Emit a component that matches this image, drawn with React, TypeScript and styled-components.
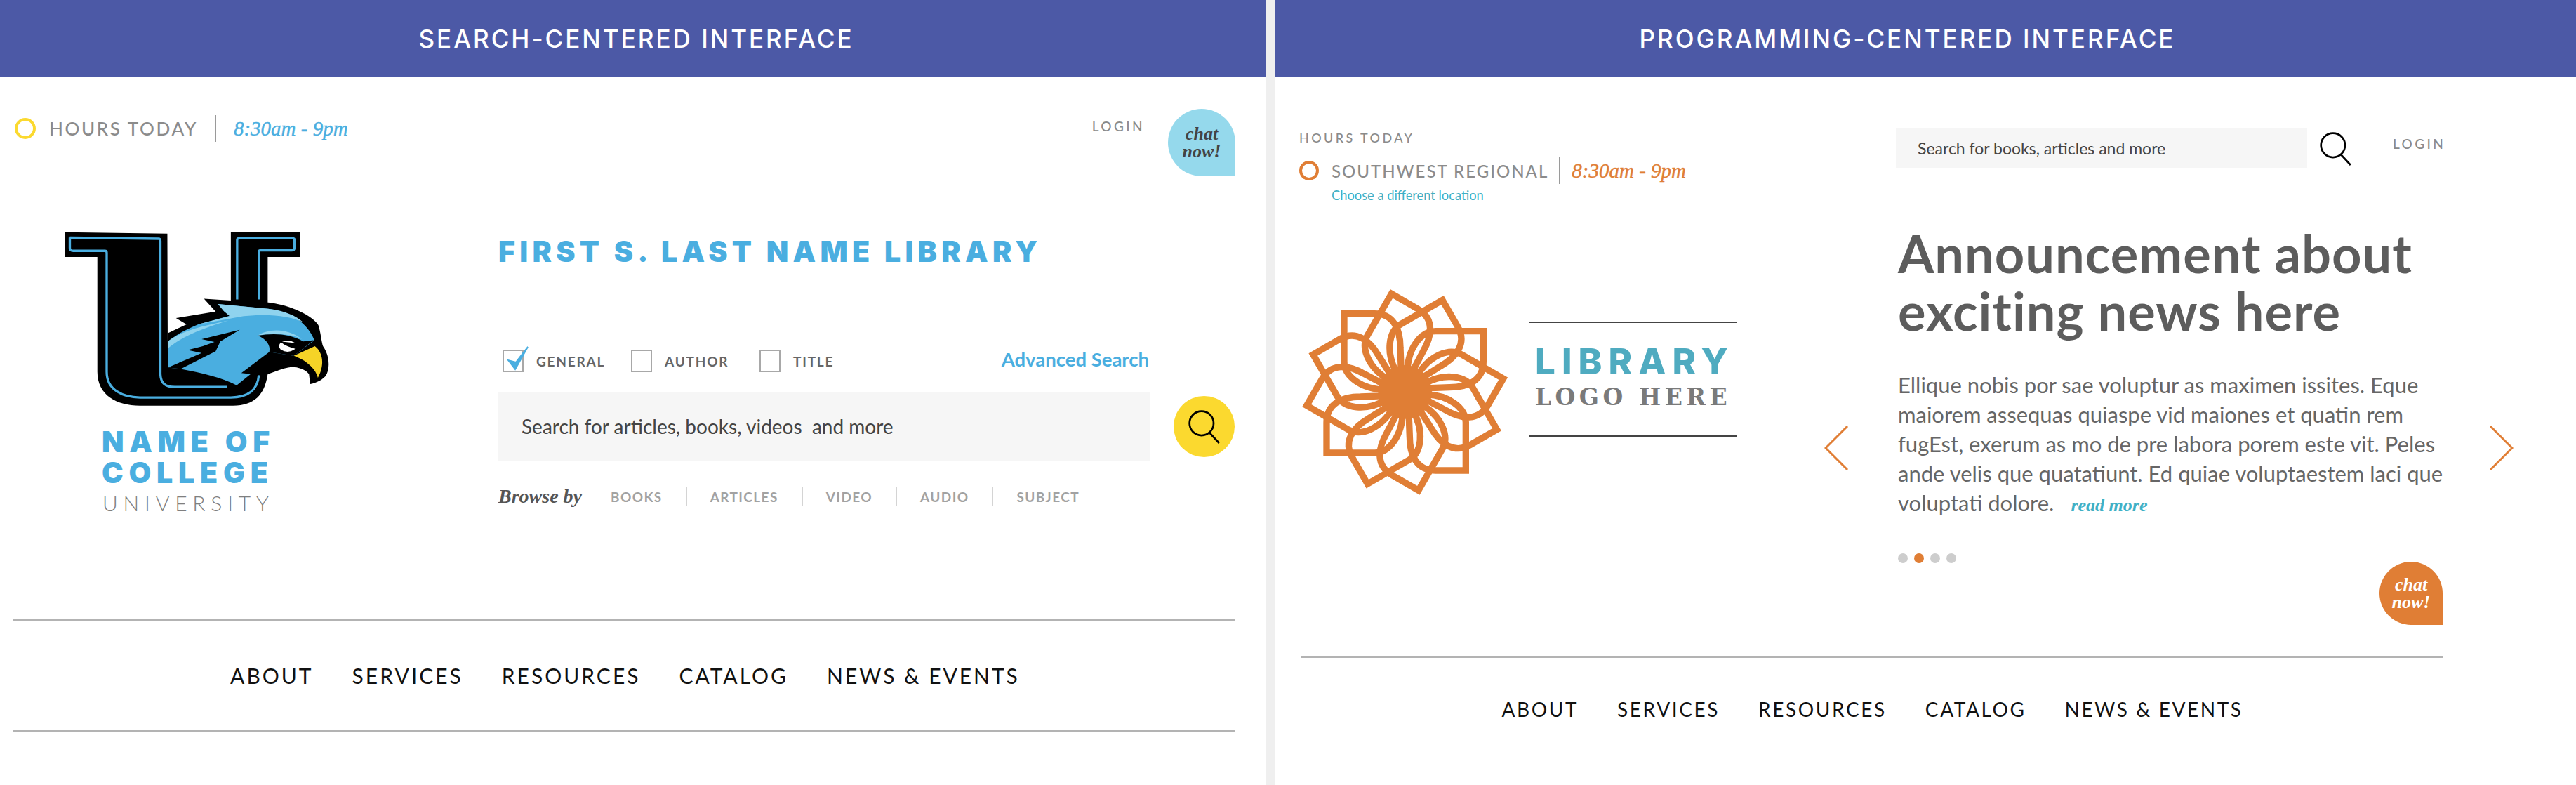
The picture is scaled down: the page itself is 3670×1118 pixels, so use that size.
import styled, { createGlobalStyle } from 'styled-components';

const GlobalStyle = createGlobalStyle`
  html, body {
    margin: 0;
    padding: 0;
    background: #fff;
    font-family: "Lato", "Open Sans", sans-serif;
  }
  * { box-sizing: border-box; }
`;

const SANS = '"Lato", "Open Sans", sans-serif';
const HEAVY = '"Inter", "Liberation Sans", sans-serif';
const SERIF = '"Liberation Serif", serif';
const BLUE = '#4aaee0';
const ORANGE = '#e07e35';
const TEAL = '#3fb0c6';

const Page = styled.div`
  display: flex;
  width: 3670px;
  height: 1118px;
  overflow: hidden;
  background: #efefef;
  gap: 14px;
  font-family: ${SANS};
`;

const Panel = styled.section<{ $width: number }>`
  width: ${({ $width }) => $width}px;
  flex: none;
  background: #fff;
`;

const Banner = styled.h2<{ $shift: number }>`
  margin: 0;
  height: 109px;
  background: #4c59a6;
  color: #fff;
  display: flex;
  align-items: center;
  justify-content: center;
  padding-left: ${({ $shift }) => Math.max($shift, 0)}px;
  padding-right: ${({ $shift }) => Math.max(-$shift, 0)}px;
  font-family: ${HEAVY};
  font-size: 35px;
  font-weight: 500;
  letter-spacing: 3px;
`;

/* left panel */
const LeftBody = styled.div`
  padding: 46px 43px 0 21px;
`;

const TopRow = styled.div`
  display: flex;
  justify-content: space-between;
  align-items: flex-start;
  height: 175px;
`;

const Hours = styled.div`
  display: flex;
  align-items: center;
  margin-top: 9px;
  height: 38px;
`;

const StatusRing = styled.span<{ $color: string; $size: number }>`
  width: ${({ $size }) => $size}px;
  height: ${({ $size }) => $size}px;
  border: 4px solid ${({ $color }) => $color};
  border-radius: 50%;
  flex: none;
`;

const HoursLabel = styled.span<{ $size: number; $gap: number; $spacing: number }>`
  margin-left: ${({ $gap }) => $gap}px;
  font-size: ${({ $size }) => $size}px;
  font-weight: 500;
  letter-spacing: ${({ $spacing }) => $spacing}px;
  color: #8b8b8b;
  white-space: nowrap;
`;

const HoursTime = styled.span<{ $color: string; $height: number; $pad: number }>`
  margin-left: ${({ $pad }) => $pad}px;
  padding-left: ${({ $pad }) => $pad + 1}px;
  height: ${({ $height }) => $height}px;
  border-left: 2px solid #9a9a9a;
  display: flex;
  align-items: center;
  font-family: ${SERIF};
  font-style: italic;
  font-weight: 400;
  font-size: 29px;
  -webkit-text-stroke: 0.4px ${({ $color }) => $color};
  color: ${({ $color }) => $color};
  white-space: nowrap;
`;

const TopActions = styled.div`
  display: flex;
  align-items: flex-start;
  gap: 33px;
`;

const Login = styled.a<{ $top: number; $left?: number }>`
  margin-top: ${({ $top }) => $top}px;
  margin-left: ${({ $left }) => $left ?? 0}px;
  font-size: 19px;
  font-weight: 500;
  letter-spacing: 3.4px;
  line-height: 1;
  color: #8a8a8a;
`;

const ChatBubble = styled.div<{ $bg: string; $color: string; $size: number; $top?: number }>`
  width: ${({ $size }) => $size}px;
  height: ${({ $size }) => $size}px;
  margin-top: ${({ $top }) => $top ?? 0}px;
  flex: none;
  border-radius: 50% 50% 0 50%;
  background: ${({ $bg }) => $bg};
  color: ${({ $color }) => $color};
  display: flex;
  align-items: center;
  justify-content: center;
  text-align: center;
  font-family: ${SERIF};
  font-style: italic;
  font-weight: 700;
  font-size: 26px;
  line-height: 25px;
`;

const MainRow = styled.div`
  display: grid;
  grid-template-columns: 689px 1fr;
  height: 551px;
`;

const CollegeColumn = styled.div`
  padding: 0 0 0 71px;
`;

const CollegeLogo = styled.svg`
  display: block;
  width: 378px;
  height: 250px;
`;

const CollegeName = styled.div`
  margin: 27px 0 0 53px;
  color: ${BLUE};
  font-family: ${HEAVY};
  font-weight: 900;
  font-size: 41px;
  line-height: 44px;
  letter-spacing: 7.8px;
  white-space: nowrap;
`;

const CollegeKind = styled.div`
  margin: 5px 0 0 54px;
  color: #7f7f7f;
  font-size: 30px;
  font-weight: 300;
  line-height: 32px;
  letter-spacing: 7.8px;
`;

const SearchColumn = styled.div`
  display: flex;
  flex-direction: column;
`;

const LibraryTitle = styled.h1`
  margin: 0;
  height: 56px;
  color: ${BLUE};
  font-family: ${HEAVY};
  font-weight: 900;
  font-size: 41px;
  line-height: 56px;
  letter-spacing: 6.3px;
  white-space: nowrap;
`;

const FilterRow = styled.div`
  margin: 106px 0 0 6px;
  height: 38px;
  display: flex;
  align-items: flex-end;
  width: 921px;
`;

const Filter = styled.label<{ $width: number }>`
  width: ${({ $width }) => $width}px;
  display: flex;
  align-items: center;
  position: relative;
`;

const Box = styled.span`
  width: 30px;
  height: 32px;
  border: 2px solid #a8a8a8;
  flex: none;
  margin-right: 18px;
`;

const Tick = styled.svg`
  position: absolute;
  left: 6px;
  top: -6px;
  width: 34px;
  height: 38px;
`;

const FilterLabel = styled.span`
  font-size: 19px;
  font-weight: 700;
  letter-spacing: 1.8px;
  color: #666;
`;

const AdvancedLink = styled.a`
  margin-left: auto;
  font-size: 27.5px;
  font-weight: 700;
  line-height: 36px;
  color: ${BLUE};
  white-space: nowrap;
`;

const SearchRow = styled.div`
  margin-top: 28px;
  display: flex;
  align-items: center;
`;

const SearchField = styled.div<{ $width: number; $height: number; $pad: number; $size: number }>`
  width: ${({ $width }) => $width}px;
  height: ${({ $height }) => $height}px;
  background: #f6f6f6;
  padding-left: ${({ $pad }) => $pad}px;
  display: flex;
  align-items: center;
  flex: none;
  font-size: ${({ $size }) => $size}px;
  color: #444;
  white-space: pre;
`;

const YellowButton = styled.div`
  margin-left: 33px;
  width: 87px;
  height: 87px;
  border-radius: 50%;
  background: #fbd92f;
  display: flex;
  align-items: center;
  justify-content: center;
  flex: none;
`;

const BrowseRow = styled.div`
  margin-top: 37px;
  display: flex;
  align-items: center;
  height: 28px;
`;

const BrowseLabel = styled.span`
  width: 160px;
  font-family: ${SERIF};
  font-style: italic;
  font-weight: 700;
  font-size: 28px;
  color: #555;
`;

const BrowseItem = styled.a<{ $last?: boolean }>`
  padding-right: 33px;
  margin-right: 33px;
  height: 27px;
  display: flex;
  align-items: center;
  border-right: ${({ $last }) => ($last ? 'none' : '2px solid #d4d4d4')};
  font-size: 19px;
  font-weight: 700;
  letter-spacing: 1.4px;
  color: #a2a2a2;
`;

const Rule = styled.hr<{ $left: number; $width: number; $thick: number }>`
  margin: 0 0 0 ${({ $left }) => $left}px;
  width: ${({ $width }) => $width}px;
  height: ${({ $thick }) => $thick}px;
  border: 0;
  background: #b3b3b3;
`;

const NavFrame = styled.div<{ $left: number; $width: number }>`
  margin-left: ${({ $left }) => $left}px;
  width: ${({ $width }) => $width}px;
`;

const MainNav = styled.nav<{ $height: number; $gap: number; $size: number; $spacing: number }>`
  height: ${({ $height }) => $height}px;
  display: flex;
  align-items: center;
  justify-content: center;
  gap: ${({ $gap }) => $gap}px;
  font-size: ${({ $size }) => $size}px;
  letter-spacing: ${({ $spacing }) => $spacing}px;
  color: #111;
  white-space: nowrap;
`;

/* right panel */
const RightBody = styled.div`
  display: flex;
  height: 825px;
  padding: 74px 0 0 34px;
`;

const BrandColumn = styled.div`
  width: 748px;
  flex: none;
`;

const SmallHeading = styled.div`
  margin-top: 2px;
  font-size: 18px;
  font-weight: 500;
  line-height: 22px;
  letter-spacing: 3.4px;
  color: #8b8b8b;
`;

const LocationRow = styled.div`
  display: flex;
  align-items: center;
  margin-top: 17px;
  height: 38px;
`;

const ChooseLink = styled.a`
  display: block;
  margin: 4px 0 0 46px;
  font-size: 18.3px;
  line-height: 24px;
  color: ${TEAL};
`;

const Brand = styled.div`
  display: flex;
  align-items: center;
  margin-top: 110px;
`;

const Flower = styled.svg`
  display: block;
  width: 340px;
  height: 340px;
  margin-left: -31px;
  flex: none;
`;

const BrandText = styled.div`
  width: 295px;
  height: 164px;
  margin: -60px 0 0 19px;
  border-top: 2px solid #444;
  border-bottom: 2px solid #444;
  display: flex;
  flex-direction: column;
  align-items: center;
`;

const BrandTitle = styled.div`
  margin-top: 30px;
  padding-left: 5px;
  font-family: ${HEAVY};
  font-weight: 800;
  font-size: 51px;
  line-height: 50px;
  letter-spacing: 9px;
  color: #4fabc0;
`;

const BrandSub = styled.div`
  margin-top: 8px;
  font-family: "DejaVu Serif", serif;
  font-weight: 700;
  font-size: 33px;
  line-height: 36px;
  letter-spacing: 5.6px;
  color: #7a7a7a;
`;

const ArrowButton = styled.svg<{ $gap: number }>`
  display: block;
  width: 35px;
  height: 64px;
  flex: none;
  margin: 423px 0 0 ${({ $gap }) => $gap}px;
`;

const SlideColumn = styled.div`
  width: 776px;
  flex: none;
  margin-left: 70px;
`;

const SearchBar = styled.div`
  display: flex;
  align-items: center;
  margin-left: -3px;
  height: 56px;
`;

const PlainIcon = styled.span`
  display: flex;
  margin-left: 16px;
  flex: none;
`;

const Headline = styled.h1`
  margin: 81px 0 0;
  font-size: 74px;
  font-weight: 700;
  line-height: 82px;
  letter-spacing: 1px;
  color: #5d5d5d;
  white-space: nowrap;
`;

const Body = styled.p`
  margin: 43px 0 0;
  font-size: 31px;
  line-height: 42px;
  color: #666;
  white-space: nowrap;
`;

const ReadMore = styled.a`
  margin-left: 24px;
  font-family: ${SERIF};
  font-style: italic;
  font-weight: 700;
  font-size: 26px;
  color: ${TEAL};
`;

const SlideFooter = styled.div`
  display: flex;
  justify-content: space-between;
  align-items: flex-start;
  margin-top: 47px;
`;

const Dots = styled.div`
  display: flex;
  gap: 9px;
`;

const Dot = styled.span<{ $active?: boolean }>`
  width: 14px;
  height: 14px;
  border-radius: 50%;
  background: ${({ $active }) => ($active ? ORANGE : '#cdcdcd')};
`;

type NavProps = { gap: number; size: number; height: number; spacing: number };

const NavLinks = ({ gap, size, height, spacing }: NavProps) => (
  <MainNav $gap={gap} $size={size} $height={height} $spacing={spacing}>
    <span>ABOUT</span>
    <span>SERVICES</span>
    <span>RESOURCES</span>
    <span>CATALOG</span>
    <span>NEWS &amp; EVENTS</span>
  </MainNav>
);

const Magnifier = ({ size }: { size: number }) => (
  <svg width={size} height={size} viewBox="0 0 48 48" fill="none" stroke="#000">
    <circle cx="20" cy="20" r="16.5" strokeWidth="2.6" />
    <line x1="31" y1="33" x2="44" y2="47" strokeWidth="2.6" />
  </svg>
);

const Falcon = () => (
  <CollegeLogo viewBox="128 90 1136 752">
    <path
      fill="#000"
      d="M128 92 L568 98 L570 700 L840 700 L840 92 L1138 92 L1138 198 L998 198 L998 700 C985 790 940 835 850 835 L450 835 C350 835 268 790 268 690 L268 198 L128 198 Z"
    />
    <g fill="none" stroke="#4aaee0" strokeWidth="10">
      <path d="M150 115 L530 120 Q538 120 538 130 L538 700 C540 740 560 755 600 755 L825 755" />
      <path d="M150 115 L150 160 Q150 172 165 172 L300 172 Q308 172 308 180 L308 690 C308 770 380 800 450 800 L840 800 C910 800 955 770 960 705" />
      <path d="M867 380 L867 125 Q867 118 875 118 L1105 118 Q1113 118 1113 125 L1113 160 Q1113 170 1100 170 L965 170 Q960 170 960 178 L960 380" />
    </g>
    <path
      fill="#000"
      d="M725 377 L840 385 L1000 393 C1100 405 1190 450 1215 490 C1225 520 1228 560 1235 580 C1264 620 1267 680 1245 710 C1225 730 1200 740 1180 743 L1175 700 C1160 680 1130 670 1100 670 C1060 675 1030 690 995 702 L950 700 L570 700 L570 525 L650 487 L605 460 L775 432 Z"
    />
    <path
      fill="#4aaee0"
      d="M785 400 L1000 420 C1090 430 1170 480 1198 555 L1110 622 L1005 605 L885 695 L925 700 L865 748 C800 715 720 695 625 678 L570 672 L570 560 C620 520 660 505 700 487 L835 450 L810 430 Z"
    />
    <path fill="#8fd3ee" d="M785 400 L1000 420 C1070 428 1120 450 1150 478 C1090 450 1000 440 895 452 L700 487 L835 452 L810 430 Z" />
    <path fill="#8fd3ee" d="M570 560 C640 510 720 495 830 470 C740 500 640 530 570 590 Z" />
    <path fill="#000" d="M878 510 L715 550 L770 562 L720 580 L655 597 L715 610 L570 672 L625 678 L775 602 L795 560 Z" />
    <path fill="#8fd3ee" d="M955 535 C1000 505 1080 500 1145 550 C1090 525 1020 525 955 535 Z" />
    <path fill="#000" d="M955 535 C1020 525 1090 525 1150 560 L1195 555 L1110 622 L1005 605 C1012 575 990 548 955 535 Z" />
    <ellipse cx="1083" cy="580" rx="36" ry="24" fill="#fff" />
    <path fill="#000" d="M1050 560 L1130 568 L1118 592 C1095 585 1075 580 1050 560 Z" />
    <path
      fill="#f5d327"
      d="M1110 622 L1200 580 C1228 600 1248 650 1213 716 C1205 680 1165 640 1110 622 Z"
    />
  </CollegeLogo>
);

const petals = Array.from({ length: 12 }, (_, i) => i * 30);

const LibraryFlower = () => (
  <Flower viewBox="0 0 1020 1020">
    <g transform="translate(545 475)" fill="none" stroke="#e07e35" strokeWidth="28">
      {petals.map((deg) => (
        <path
          key={deg}
          transform={`rotate(${deg})`}
          d="M10 -80 C10 -190 70 -260 130 -260 L335 -260 L335 -130 C335 -50 270 -20 190 -20 L60 -15"
        />
      ))}
      <circle r="115" fill="#e07e35" stroke="none" />
    </g>
  </Flower>
);

export default function App() {
  return (
    <Page>
      <GlobalStyle />
      <Panel $width={1803}>
        <Banner $shift={10}>SEARCH-CENTERED INTERFACE</Banner>
        <LeftBody>
          <TopRow>
            <Hours>
              <StatusRing $color="#fbd92f" $size={30} />
              <HoursLabel $size={26} $gap={19} $spacing={2.6}>HOURS TODAY</HoursLabel>
              <HoursTime $color={BLUE} $height={38} $pad={24}>8:30am - 9pm</HoursTime>
            </Hours>
            <TopActions>
              <Login $top={15}>LOGIN</Login>
              <ChatBubble $bg="#95d9ec" $color="#444" $size={96}>
                chat
                <br />
                now!
              </ChatBubble>
            </TopActions>
          </TopRow>
          <MainRow>
            <CollegeColumn>
              <Falcon />
              <CollegeName>
                NAME OF
                <br />
                COLLEGE
              </CollegeName>
              <CollegeKind>UNIVERSITY</CollegeKind>
            </CollegeColumn>
            <SearchColumn>
              <LibraryTitle>FIRST S. LAST NAME LIBRARY</LibraryTitle>
              <FilterRow>
                <Filter $width={183}>
                  <Box />
                  <Tick viewBox="0 0 34 38">
                    <path d="M2 21 L12 34 L30 2 L13 24 Z" fill={BLUE} stroke={BLUE} strokeWidth="2" />
                  </Tick>
                  <FilterLabel>GENERAL</FilterLabel>
                </Filter>
                <Filter $width={183}>
                  <Box />
                  <FilterLabel>AUTHOR</FilterLabel>
                </Filter>
                <Filter $width={150}>
                  <Box />
                  <FilterLabel>TITLE</FilterLabel>
                </Filter>
                <AdvancedLink>Advanced Search</AdvancedLink>
              </FilterRow>
              <SearchRow>
                <SearchField $width={929} $height={98} $pad={33} $size={28}>
                  Search for articles, books, videos  and more
                </SearchField>
                <YellowButton>
                  <Magnifier size={50} />
                </YellowButton>
              </SearchRow>
              <BrowseRow>
                <BrowseLabel>Browse by</BrowseLabel>
                <BrowseItem>BOOKS</BrowseItem>
                <BrowseItem>ARTICLES</BrowseItem>
                <BrowseItem>VIDEO</BrowseItem>
                <BrowseItem>AUDIO</BrowseItem>
                <BrowseItem $last>SUBJECT</BrowseItem>
              </BrowseRow>
            </SearchColumn>
          </MainRow>
          <Rule $left={-3} $width={1742} $thick={3} />
          <NavLinks gap={55} size={30} height={156} spacing={3} />
          <Rule $left={-3} $width={1742} $thick={2} />
        </LeftBody>
      </Panel>
      <Panel $width={1853}>
        <Banner $shift={-52}>PROGRAMMING-CENTERED INTERFACE</Banner>
        <RightBody>
          <BrandColumn>
            <SmallHeading>HOURS TODAY</SmallHeading>
            <LocationRow>
              <StatusRing $color={ORANGE} $size={28} />
              <HoursLabel $size={24} $gap={18} $spacing={2}>SOUTHWEST REGIONAL</HoursLabel>
              <HoursTime $color={ORANGE} $height={38} $pad={15}>8:30am - 9pm</HoursTime>
            </LocationRow>
            <ChooseLink>Choose a different location</ChooseLink>
            <Brand>
              <LibraryFlower />
              <BrandText>
                <BrandTitle>LIBRARY</BrandTitle>
                <BrandSub>LOGO HERE</BrandSub>
              </BrandText>
            </Brand>
          </BrandColumn>
          <ArrowButton $gap={0} viewBox="0 0 35 64" fill="none" stroke={ORANGE} strokeWidth="3">
            <path d="M33 1 L2 32 L33 63" />
          </ArrowButton>
          <SlideColumn>
            <SearchBar>
              <SearchField $width={586} $height={56} $pad={31} $size={23}>
                Search for books, articles and more
              </SearchField>
              <PlainIcon>
                <Magnifier size={50} />
              </PlainIcon>
              <Login $top={-14} $left={56}>LOGIN</Login>
            </SearchBar>
            <Headline>
              Announcement about
              <br />
              exciting news here
            </Headline>
            <Body>
              Ellique nobis por sae voluptur as maximen issites. Eque
              <br />
              maiorem assequas quiaspe vid maiones et quatin rem
              <br />
              fugEst, exerum as mo de pre labora porem este vit. Peles
              <br />
              ande velis que quatatiunt. Ed quiae voluptaestem laci que
              <br />
              voluptati dolore.
              <ReadMore>read more</ReadMore>
            </Body>
            <SlideFooter>
              <Dots>
                <Dot />
                <Dot $active />
                <Dot />
                <Dot />
              </Dots>
              <ChatBubble $bg={ORANGE} $color="#fff" $size={90} $top={12}>
                chat
                <br />
                now!
              </ChatBubble>
            </SlideFooter>
          </SlideColumn>
          <ArrowButton $gap={66} viewBox="0 0 35 64" fill="none" stroke={ORANGE} strokeWidth="3">
            <path d="M2 1 L33 32 L2 63" />
          </ArrowButton>
        </RightBody>
        <Rule $left={37} $width={1627} $thick={3} />
        <NavFrame $left={37} $width={1627}>
          <NavLinks gap={55} size={28} height={146} spacing={2.6} />
        </NavFrame>
      </Panel>
    </Page>
  );
}
